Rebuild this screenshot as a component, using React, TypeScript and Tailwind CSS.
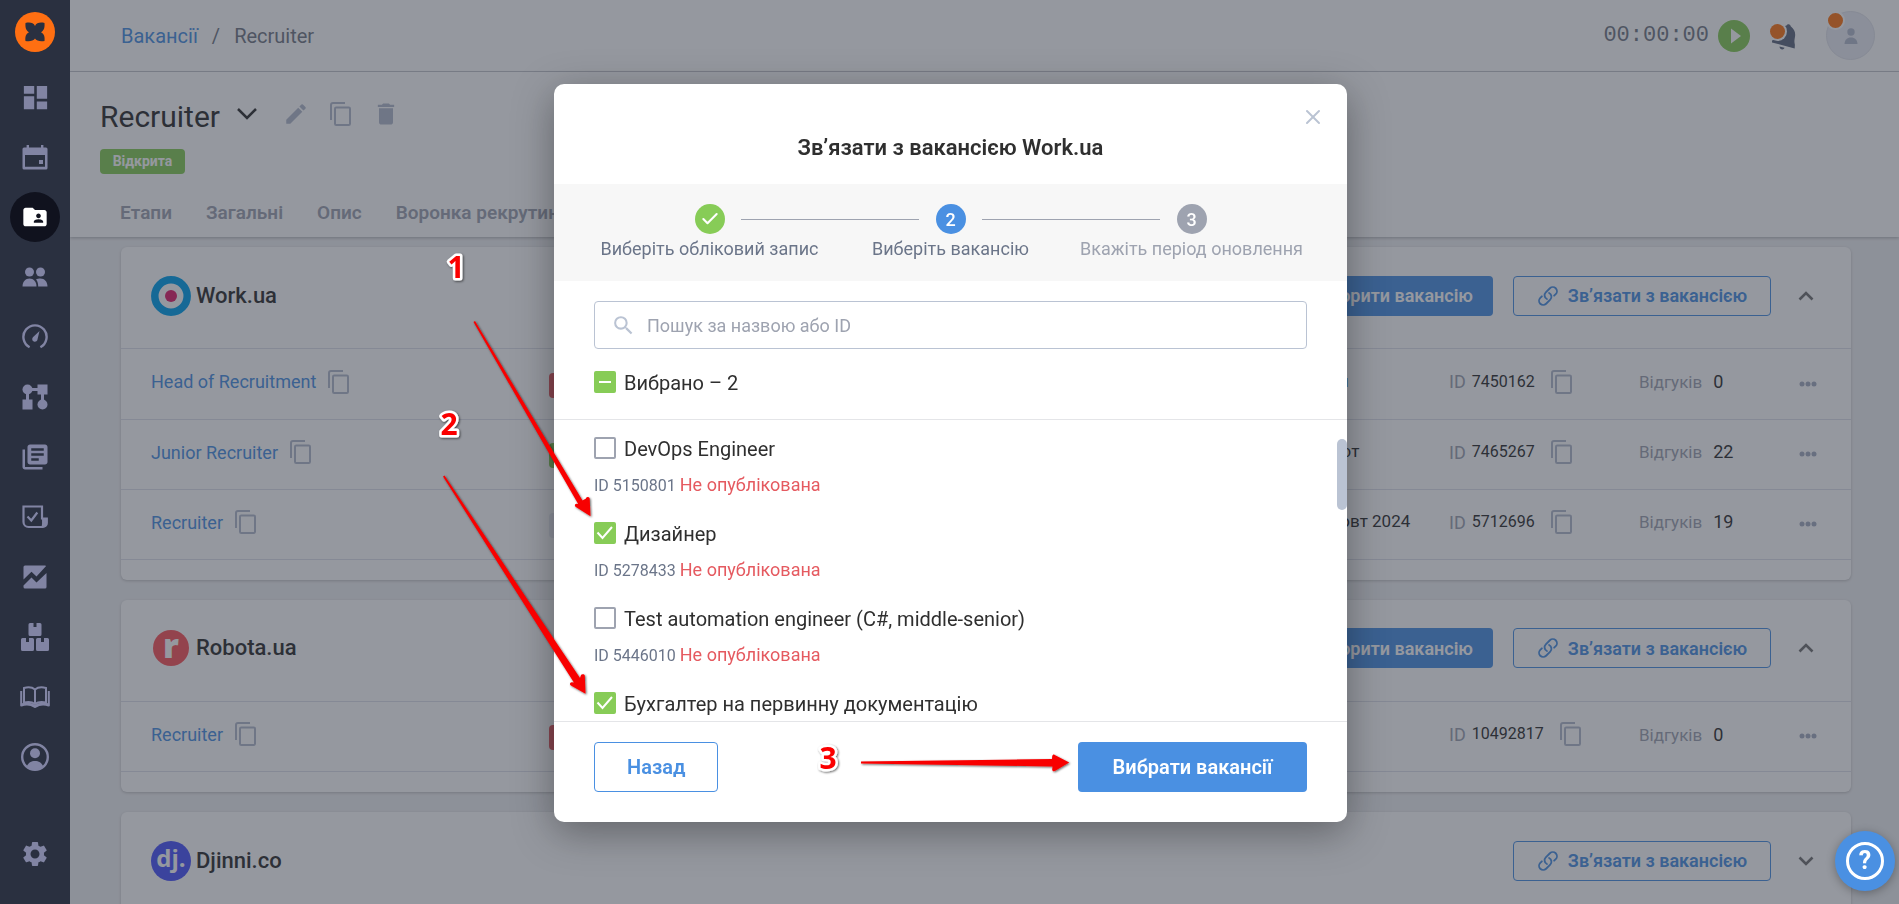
import { useState } from "react";
import type { ReactNode } from "react";
import { MdDashboard, MdDelete, MdEdit, MdFolderShared, MdLibraryBooks, MdSearch, MdSettings } from "react-icons/md";
import { HiOutlineLink } from "react-icons/hi2";
import { Check, X } from "lucide-react";

function CalendarIcon() {
  return (
    <svg viewBox="0 0 26 26" className="size-[26px]">
      <path d="M5.800 1v4M20.200 1v4" stroke="currentColor" strokeWidth="2.400" />
      <path
        fill="currentColor"
        fillRule="evenodd"
        d="M2 3.500h22A1.500 1.500 0 0 1 25.500 5v19a1.500 1.500 0 0 1-1.500 1.500H2A1.500 1.500 0 0 1 .5 24V5A1.500 1.500 0 0 1 2 3.500zM3 11v11.800h20V11z"
      />
      <path d="M17 16h4v4h-4z" fill="currentColor" />
    </svg>
  );
}

function PeopleIcon() {
  return (
    <svg viewBox="0 0 26 20" className="h-5 w-[26px]" fill="currentColor">
      <circle cx="7.5" cy="5" r="4.5" />
      <circle cx="18.5" cy="5" r="4.5" />
      <path d="M.5 19.5c0-5 3-8 7-8s7 3 7 8z" />
      <path d="M14 12.600c1.200-.8 2.800-1.100 4.500-1.100 4 0 7 3 7 8h-9.300c0-3-.7-5.200-2.200-6.900z" />
    </svg>
  );
}

function GaugeIcon() {
  return (
    <svg viewBox="0 0 26 26" className="size-[26px]">
      <path d="M7.600 23.200A11.600 11.600 0 1 1 18.400 23.200" fill="none" stroke="currentColor" strokeWidth="2.400" />
      <path d="M17.500 7 15.600 15a2.700 2.700 0 1 1-4.700-1.800z" fill="currentColor" />
    </svg>
  );
}

function WorkflowIcon() {
  return (
    <svg viewBox="0 0 26 26" className="size-[26px]" fill="currentColor">
      <circle cx="5.500" cy="5.500" r="5" />
      <path d="M9 4h8v3H9zM4 9h3v8H4zM19 9h3v8h-3z" />
      <path d="M15.500.5h10v10h-10zM.5 15.500h10v10H.5z" />
      <circle cx="20.500" cy="20.500" r="5" />
    </svg>
  );
}

function TaskIcon() {
  return (
    <svg viewBox="0 0 26 24" className="h-6 w-[26px]">
      <path d="M1.500 1.500h18.500v12h4.800v4.500a4 4 0 0 1-4 4H6.500a5 5 0 0 1-5-5z" fill="none" stroke="currentColor" strokeWidth="2.200" />
      <path d="M20 13h5v5c0 3-2 4.500-6 4.500 1.500-2 1-5 1-9.500z" fill="currentColor" />
      <path d="m5.500 11.500 3.800 4 6-8" fill="none" stroke="currentColor" strokeWidth="2.200" />
    </svg>
  );
}

function ReportIcon() {
  return (
    <svg viewBox="0 0 24 24" className="size-6" fill="currentColor">
      <path d="M2 .5h20c.5 0 .9.200 1.100.5L13.500 11.500l-5-4.800L.5 14.500V2A1.500 1.500 0 0 1 2 .5z" />
      <path d="M23.500 8v14a1.500 1.500 0 0 1-1.500 1.500H2A1.500 1.500 0 0 1 .5 22v-1.500l8-8 5 5z" />
    </svg>
  );
}

function BoxesIcon() {
  return (
    <svg viewBox="0 0 28 28" className="size-7" fill="currentColor">
      <path d="M9 0h3.500v4h3V0H19a1.500 1.500 0 0 1 1.500 1.500v10A1.500 1.500 0 0 1 19 13H9a1.500 1.500 0 0 1-1.500-1.500v-10A1.500 1.500 0 0 1 9 0z" />
      <path d="M1.500 15H5v4h3v-4h3.500A1.500 1.500 0 0 1 13 16.500v10a1.500 1.500 0 0 1-1.500 1.500h-10A1.500 1.500 0 0 1 0 26.500v-10A1.500 1.500 0 0 1 1.500 15z" />
      <path d="M16.500 15H20v4h3v-4h3.500a1.500 1.500 0 0 1 1.500 1.500v10a1.500 1.500 0 0 1-1.500 1.500h-10a1.500 1.500 0 0 1-1.500-1.500v-10a1.500 1.500 0 0 1 1.500-1.500z" />
    </svg>
  );
}

function BookIcon() {
  return (
    <svg viewBox="0 0 30 22" className="h-[22px] w-[30px]" fill="none" stroke="currentColor" strokeWidth="2">
      <path d="M15 3.500C12 1 8 .9 4 2v14.500c4-1 8-.8 11 1.500 3-2.300 7-2.500 11-1.500V2c-4-1.100-8-1-11 1.500zM15 3.500V18" />
      <path d="M1.200 5v15.200M28.800 5v15.200" />
      <path d="M1 19.200c5-1.800 10-1.200 14 1.200 4-2.400 9-3 14-1.200" strokeWidth="3" />
    </svg>
  );
}

function AccountIcon() {
  return (
    <svg viewBox="0 0 28 28" className="size-7">
      <circle cx="14" cy="14" r="12.800" fill="none" stroke="currentColor" strokeWidth="2.400" />
      <circle cx="14" cy="10.200" r="5" fill="currentColor" />
      <path d="M5.800 23.500c1.500-4 4.500-5.500 8.200-5.500s6.700 1.500 8.200 5.500c-4.500 4-12 4-16.400 0z" fill="currentColor" />
    </svg>
  );
}

function CopyIcon() {
  return (
    <svg viewBox="0 0 21 24" className="h-6 w-[21px]" fill="none" stroke="currentColor" strokeWidth="2">
      <path d="M1 18V3a2 2 0 0 1 2-2h12" />
      <rect x="5" y="5.500" width="15" height="17.500" rx="1.200" />
    </svg>
  );
}

const navItems: { label: string; icon: ReactNode; active?: boolean }[] = [
  { label: "Дашборд", icon: <MdDashboard size={31} className="-scale-x-100 rotate-180" /> },
  { label: "Календар", icon: <CalendarIcon /> },
  { label: "Вакансії", icon: <MdFolderShared size={28} />, active: true },
  { label: "Кандидати", icon: <PeopleIcon /> },
  { label: "Показники", icon: <GaugeIcon /> },
  { label: "Процеси", icon: <WorkflowIcon /> },
  { label: "Бібліотека", icon: <MdLibraryBooks size={30} /> },
  { label: "Завдання", icon: <TaskIcon /> },
  { label: "Звіти", icon: <ReportIcon /> },
  { label: "Активи", icon: <BoxesIcon /> },
  { label: "База знань", icon: <BookIcon /> },
  { label: "Профіль", icon: <AccountIcon /> },
];

function Sidebar() {
  return (
    <aside className="z-20 flex w-[70px] shrink-0 flex-col items-center bg-[#2a3040] pt-3 pb-5 text-[#8184a3]">
      <a href="#home" aria-label="Головна">
        <svg viewBox="0 0 40 40" className="size-10">
          <circle cx="20" cy="20" r="20" fill="#ff6f12" />
          <path
            d="M10.500 11c4-1 8-.5 9.500 3 1.500-3.500 5.500-4 9.500-3 .3 4-.2 7.500-3.500 9.200 3.300 1.500 4 5 3.500 8.800-4 .8-8 0-9.500-2.500-1.500 2.500-5.500 3.300-9.500 2.500-.5-3.800.2-7.300 3.500-8.800-3.300-1.700-3.800-5.200-3.500-9.200z"
            fill="#2a3040"
          />
        </svg>
      </a>
      <nav className="mt-[15px] flex flex-col">
        {navItems.map((item) => (
          <a key={item.label} href="#nav" aria-label={item.label} className="flex h-[60px] items-center justify-center">
            <span
              className={
                item.active
                  ? "flex size-[50px] items-center justify-center rounded-full bg-[#10121e] text-white"
                  : "flex size-[50px] items-center justify-center"
              }
            >
              {item.icon}
            </span>
          </a>
        ))}
      </nav>
      <a href="#settings" aria-label="Налаштування" className="mt-auto flex h-[60px] items-center">
        <MdSettings size={30} />
      </a>
    </aside>
  );
}

function TopBar() {
  return (
    <header className="flex h-[72px] shrink-0 items-center justify-between border-b border-[#cbcdd4] bg-white pr-6 pl-[51px]">
      <nav className="flex items-center gap-[14px] text-[20px] text-[#727885]">
        <a href="#vacancies" className="text-[#4a90e2]">
          Вакансії
        </a>
        <span>/</span>
        <span>Recruiter</span>
      </nav>
      <div className="flex items-center">
        <span className="font-['Liberation_Mono',monospace] text-[22px] text-[#727885]">00:00:00</span>
        <button type="button" aria-label="Запустити таймер" className="ml-2">
          <svg viewBox="0 0 34 34" className="size-[34px]">
            <circle cx="17" cy="17" r="16" fill="#87cc57" />
            <path d="M14 9.500v15l10-7.500z" fill="#fff" />
          </svg>
        </button>
        <button type="button" aria-label="Сповіщення" className="ml-[18px]">
          <svg viewBox="0 0 28 28" className="size-7">
            <path
              d="M17.500 3.500a2.200 2.200 0 0 1 4.200.8c3.800 3 5 6.500 4.300 10.500-.7 4-.8 5.500-.1 8l-.2 3.700L3 20.500v-2c3-.8 4.500-3 5.500-6.500 1.200-4.500 4-7.500 9-8.500zM10.500 24.500l5 1.300c-.8 2.800-5 1.800-5-1.300z"
              fill="#5f697e"
            />
            <circle cx="8.500" cy="9.500" r="9.500" fill="#fff" />
            <circle cx="8.500" cy="9.500" r="7.500" fill="#ff7412" />
          </svg>
        </button>
        <button
          type="button"
          aria-label="Обліковий запис"
          className="relative ml-[29px] flex size-[49px] items-center justify-center rounded-full border border-[#e0e2ea] bg-[#ebecf4] text-[#b3bacc]"
        >
          <svg viewBox="0 0 14 16" className="h-4 w-[14px]" fill="currentColor">
            <circle cx="7" cy="4" r="3.700" />
            <path d="M.5 16c.3-4.200 2.500-6.500 6.500-6.500s6.200 2.300 6.500 6.500z" />
          </svg>
          <span className="absolute -top-px -left-px size-[19px] rounded-full border-2 border-white bg-[#ff7412]" />
        </button>
      </div>
    </header>
  );
}

const tabs = ["Етапи", "Загальні", "Опис", "Воронка рекрутингу"];

function VacancyHeader() {
  return (
    <section className="z-10 shrink-0 bg-white pt-6 pl-[30px] shadow-[0_1px_3px_rgba(0,0,0,0.25)]">
      <div className="flex h-10 items-center">
        <h1 className="text-[30px] text-[#2f2f2f]">Recruiter</h1>
        <button type="button" aria-label="Інші вакансії" className="mb-1 ml-[17px] text-[#2f2f2f]">
          <svg viewBox="0 0 20 12" className="h-3 w-5" fill="none" stroke="currentColor" strokeWidth="2.500">
            <path d="m1 1 9 9 9-9" />
          </svg>
        </button>
        <div className="ml-[26px] flex items-center gap-[21px] pb-1 text-[#b3bacc]">
          <button type="button" aria-label="Редагувати">
            <MdEdit size={26} />
          </button>
          <button type="button" aria-label="Копіювати">
            <CopyIcon />
          </button>
          <button type="button" aria-label="Видалити">
            <MdDelete size={28} />
          </button>
        </div>
      </div>
      <span className="mt-[13px] flex h-[25px] w-[85px] items-center justify-center rounded bg-[#87cc57] text-[14px] font-bold text-white">
        Відкрита
      </span>
      <nav className="mt-4 flex h-[47px] items-center gap-[34px] pl-5">
        {tabs.map((tab) => (
          <button key={tab} type="button" className="text-[19px] font-semibold whitespace-nowrap text-[#9ea3b0]">
            {tab}
          </button>
        ))}
      </nav>
    </section>
  );
}

type Row = { name: string; status: string; statusColor: string; until: ReactNode; id: string; responses: number };

const workRows: Row[] = [
  {
    name: "Head of Recruitment",
    status: "Закрита",
    statusColor: "bg-[#e55a60] text-white",
    until: (
      <a href="#renew" className="text-[#4a90e2]">
        Оновити
      </a>
    ),
    id: "7450162",
    responses: 0,
  },
  {
    name: "Junior Recruiter",
    status: "Відкрита",
    statusColor: "bg-[#87cc57] text-white",
    until: "до 25 лют",
    id: "7465267",
    responses: 22,
  },
  {
    name: "Recruiter",
    status: "Архівна",
    statusColor: "bg-[#ebecf4] text-[#727885]",
    until: "до 12 жовт 2024",
    id: "5712696",
    responses: 19,
  },
];

const robotaRows: Row[] = [
  {
    name: "Recruiter",
    status: "Закрита",
    statusColor: "bg-[#e55a60] text-white",
    until: "",
    id: "10492817",
    responses: 0,
  },
];

function CopyButton() {
  return (
    <button type="button" aria-label="Копіювати" className="text-[#b3bacc]">
      <CopyIcon />
    </button>
  );
}

function VacancyTable({ rows }: { rows: Row[] }) {
  return (
    <table className="w-full table-fixed text-[18px] text-[#2f2f2f]">
      <colgroup>
        <col className="w-[428px]" />
        <col />
        <col className="w-[169px]" />
        <col className="w-[190px]" />
        <col className="w-[160px]" />
        <col className="w-[52px]" />
      </colgroup>
      <tbody>
        {rows.map((row) => (
          <tr key={row.id} className="h-[70px] border-b border-[#dfe1ea]">
            <td className="pb-1 pl-[30px]">
              <div className="flex items-center gap-3">
                <a href="#vacancy" className="text-[#4a90e2]">
                  {row.name}
                </a>
                <CopyButton />
              </div>
            </td>
            <td>
              <span className={"inline-flex h-[25px] items-center rounded px-3 text-[14px] font-bold " + row.statusColor}>
                {row.status}
              </span>
            </td>
            <td className="pb-1 text-[17px]">{row.until}</td>
            <td className="pb-1">
              <div className="flex items-center">
                <span className="text-[#9ea3b0]">ID</span>
                <span className="mr-4 ml-[6px] text-[16px]">{row.id}</span>
                <CopyButton />
              </div>
            </td>
            <td className="pb-1">
              <span className="mr-[11px] text-[17px] text-[#9ea3b0]">Відгуків</span>
              {row.responses}
            </td>
            <td>
              <button type="button" aria-label="Дії" className="flex text-[#a5adc0]">
                <svg viewBox="0 0 18 6" className="h-[6px] w-[18px]" fill="currentColor">
                  <circle cx="3" cy="3" r="2.500" />
                  <circle cx="9" cy="3" r="2.500" />
                  <circle cx="15" cy="3" r="2.500" />
                </svg>
              </button>
            </td>
          </tr>
        ))}
      </tbody>
    </table>
  );
}

function PlatformCard({ logo, name, rows }: { logo: ReactNode; name: string; rows?: Row[] }) {
  return (
    <section className="shrink-0 rounded-md bg-white pb-5 shadow-[0_1px_3px_rgba(0,0,0,0.2)]">
      <div className="flex h-[102px] items-center border-b border-[#dfe1ea] pr-[37px] pb-1 pl-[30px]">
        <span className="flex size-10 shrink-0 items-center justify-center">{logo}</span>
        <h2 className="ml-[5px] pb-px text-[22px] font-medium text-[#2f2f2f]">{name}</h2>
        <div className="ml-auto flex items-center gap-5">
          {rows && (
            <button type="button" className="h-10 rounded bg-[#4a90e2] px-5 text-[18px] font-semibold text-white">
              Створити вакансію
            </button>
          )}
          <button
            type="button"
            className="flex h-10 w-[258px] items-center justify-center gap-[9px] rounded border border-[#4a90e2] text-[18px] font-semibold whitespace-nowrap text-[#4a90e2]"
          >
            <HiOutlineLink size={22} strokeWidth={2} />
            Зв’язати з вакансією
          </button>
        </div>
        <button type="button" aria-label="Згорнути або розгорнути" className="ml-[27px] text-[#727272]">
          <svg viewBox="0 0 16 10" className="h-[10px] w-4" fill="none" stroke="currentColor" strokeWidth="2.600">
            <path d={rows ? "m1.500 8.500 6.500-6.500 6.500 6.500" : "m1.500 1.500 6.500 6.500 6.500-6.500"} />
          </svg>
        </button>
      </div>
      {rows && <VacancyTable rows={rows} />}
    </section>
  );
}

function Step({ badge, label, color, muted }: { badge: ReactNode; label: string; color: string; muted?: boolean }) {
  return (
    <li className="flex w-[242px] shrink-0 flex-col items-center">
      <span className={"flex size-[30px] items-center justify-center rounded-full text-[18px] font-medium text-white " + color}>
        {badge}
      </span>
      <span className={"mt-[3px] text-[18px] leading-6 whitespace-nowrap " + (muted ? "text-[#9ea3b0]" : "text-[#6b7589]")}>
        {label}
      </span>
    </li>
  );
}

function CheckField({ label, checked, mixed, onToggle }: { label: string; checked: boolean; mixed?: boolean; onToggle: () => void }) {
  return (
    <label className="flex w-fit gap-2 text-[20px] leading-6 text-[#2f2f2f]">
      <span className="grid size-[22px] place-items-center">
        <input
          type="checkbox"
          checked={checked}
          onChange={onToggle}
          className="col-start-1 row-start-1 size-[22px] appearance-none rounded-[2px] border-2 border-[#9ea3b0] bg-white checked:border-[#87cc57] checked:bg-[#87cc57]"
        />
        {checked && (
          <svg
            viewBox="0 0 22 22"
            className="pointer-events-none col-start-1 row-start-1 size-[22px]"
            fill="none"
            stroke="#fff"
            strokeWidth="2"
          >
            <path d={mixed ? "M5 11h12" : "m3.500 10.500 5 5.500 9.500-11"} />
          </svg>
        )}
      </span>
      {label}
    </label>
  );
}

const options: { id: string; name: string; state?: string }[] = [
  { id: "5150801", name: "DevOps Engineer", state: "Не опублікована" },
  { id: "5278433", name: "Дизайнер", state: "Не опублікована" },
  { id: "5446010", name: "Test automation engineer (C#, middle-senior)", state: "Не опублікована" },
  { id: "5493127", name: "Бухгалтер на первинну документацію" },
];

function LinkDialog() {
  const [selected, setSelected] = useState<string[]>(["5278433", "5493127"]);
  const toggle = (id: string) =>
    setSelected((prev) => (prev.includes(id) ? prev.filter((item) => item !== id) : [...prev, id]));

  return (
    <div
      role="dialog"
      aria-labelledby="dialog-title"
      className="flex w-[793px] max-w-full flex-col rounded-[10px] bg-white shadow-[0_10px_40px_rgba(0,0,0,0.35)]"
    >
      <div className="flex h-[50px] justify-end pt-[21px] pr-[22px]">
        <button type="button" aria-label="Закрити" className="size-6 text-[#bac3d3]">
          <X size={24} strokeWidth={2} />
        </button>
      </div>
      <h2 id="dialog-title" className="h-[50px] text-center text-[22px] leading-7 font-semibold text-[#2f2f2f]">
        Зв’язати з вакансією Work.ua
      </h2>
      <div className="h-[97px] bg-[#f7f7f7] pt-5">
        <ol className="grid grid-cols-3 justify-items-center px-[35px]">
          <Step badge={<Check size={20} strokeWidth={2.5} />} label="Виберіть обліковий запис" color="bg-[#87cc57]" />
          <Step badge="2" label="Виберіть вакансію" color="bg-[#4a90e2]" />
          <Step badge="3" label="Вкажіть період оновлення" color="bg-[#9ea3b0]" muted />
        </ol>
        <div className="-mt-[42px] flex justify-center gap-[63px]">
          <span className="h-px w-[178px] bg-[#9ea3b0]" />
          <span className="h-px w-[178px] bg-[#9ea3b0]" />
        </div>
      </div>
      <div className="border-b border-[#e4e5e8] px-10 pt-5">
        <label className="flex h-12 items-center gap-[11px] rounded border border-[#bac3d3] px-4 text-[#bac3d3]">
          <MdSearch size={25} className="shrink-0" />
          <input
            type="text"
            aria-label="Пошук"
            placeholder="Пошук за назвою або ID"
            className="min-w-0 flex-1 text-[18px] text-[#2f2f2f] outline-none placeholder:text-[#9ea3b0]"
          />
        </label>
        <div className="flex h-[70px] items-start pt-[22px]">
          <CheckField label={`Вибрано – ${selected.length}`} checked={selected.length > 0} mixed onToggle={() => setSelected([])} />
        </div>
      </div>
      <div className="flex h-[302px] justify-between border-b border-[#e4e5e8]">
        <ul className="pt-[17px] pl-10">
          {options.map((option) => (
            <li key={option.id} className="h-[85px]">
              <CheckField label={option.name} checked={selected.includes(option.id)} onToggle={() => toggle(option.id)} />
              {option.state && (
                <p className="mt-3 text-[18px] leading-6 text-[#e55a60]">
                  <span className="mr-1 text-[16px] text-[#6b7589]">ID {option.id}</span>
                  {option.state}
                </p>
              )}
            </li>
          ))}
        </ul>
        <span className="mt-[19px] h-[71px] w-[10px] rounded-full bg-[#bac3d3]" />
      </div>
      <div className="flex justify-between px-10 pt-5 pb-[30px] text-[20px] font-semibold">
        <button type="button" className="h-[50px] rounded border border-[#4a90e2] px-8 text-[#4a90e2]">
          Назад
        </button>
        <button type="button" className="h-[50px] w-[229px] rounded bg-[#4a90e2] text-white">
          Вибрати вакансії
        </button>
      </div>
    </div>
  );
}

function Annotations() {
  return (
    <svg className="pointer-events-none absolute top-0 left-0 z-40 size-full" aria-hidden="true">
      <defs>
        <filter id="lift" x="-20%" y="-50%" width="140%" height="200%">
          <feDropShadow dx="1" dy="1" stdDeviation="0.8" floodColor="#000" floodOpacity="0.6" />
        </filter>
      </defs>
      <g fill="#f80000" filter="url(#lift)">
        <path d="M473.500 322 475 321l107.500 179.500 3.500-2 .2-.8c.8-1.200 3-1 3.500.8l.8 17.700-15-9.500c-1.200-1.200-.6-2.900 1-3l1.700.3z" />
        <path d="M443 476.500 444.500 475.500l135.500 202.500 1-3c.8-1.300 3.500-1 3.800.6l.7 18.200-15-8.500c-1-1.400-.4-2.800 1.200-3l2.200.2z" />
      </g>
      <g fill="#f80000" filter="url(#lift)">
        <path d="M861 761.500 1052 759l.2-2.800c.4-1.800 2-2.200 3-1l14 7.300-14 8.300c-1.400 1-3 .2-3-1.400l.3-2.900L861 763.500z" />
      </g>
      <g
        className="font-['Open_Sans',sans-serif] text-[30px] font-bold"
        fill="#fb0000"
        stroke="#fff"
        strokeWidth="5"
        strokeLinejoin="round"
        paintOrder="stroke"
        textAnchor="middle"
        filter="url(#lift)"
      >
        <text x="456" y="278">1</text>
        <text x="449" y="435">2</text>
        <text x="828" y="769">3</text>
      </g>
    </svg>
  );
}

export default function App() {
  return (
    <div className="relative flex h-screen overflow-hidden bg-[#eff0f2] font-['Roboto','Noto_Sans',sans-serif]">
      <Sidebar />
      <div className="flex min-w-0 flex-1 flex-col">
        <TopBar />
        <VacancyHeader />
        <main className="flex min-h-0 flex-1 flex-col gap-5 overflow-hidden pt-[10px] pr-12 pl-[51px]">
          <PlatformCard
            name="Work.ua"
            rows={workRows}
            logo={
              <svg viewBox="0 0 40 40" className="size-10">
                <circle cx="20" cy="20" r="16.200" fill="#fff" stroke="#00a1ed" strokeWidth="7.500" />
                <circle cx="20" cy="20" r="6" fill="#e01e6a" />
              </svg>
            }
          />
          <PlatformCard
            name="Robota.ua"
            rows={robotaRows}
            logo={
              <span className="flex size-9 items-center justify-center rounded-full bg-[#fb555b] pb-[6px] font-['Open_Sans',sans-serif] text-[34px] leading-none font-extrabold text-white">
                r
              </span>
            }
          />
          <PlatformCard
            name="Djinni.co"
            logo={
              <span className="flex size-10 items-center justify-center rounded-full bg-[#4b54fb] pb-[5px] font-['Open_Sans',sans-serif] text-[24px] leading-none font-bold text-white">
                dj.
              </span>
            }
          />
        </main>
      </div>
      <div className="fixed inset-0 z-10 flex items-center justify-center bg-[#2b3240]/50 pt-[2px] pl-[2px]">
        <LinkDialog />
      </div>
      <Annotations />
      <button
        type="button"
        aria-label="Довідка"
        className="fixed right-1 bottom-[13px] z-30 flex size-[60px] items-center justify-center rounded-full bg-[#4a90e2] text-white shadow-[0_2px_10px_rgba(0,0,0,0.3)]"
      >
        <span className="flex size-[38px] items-center justify-center rounded-full border-[3px] border-white text-[25px] font-bold">?</span>
      </button>
    </div>
  );
}
